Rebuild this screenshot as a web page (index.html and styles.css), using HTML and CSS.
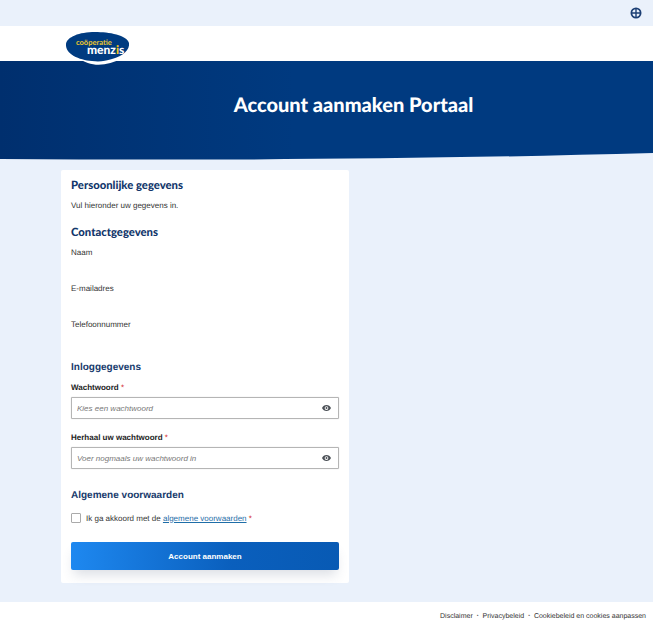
FILE: index.html
```html
<!DOCTYPE html>
<html lang="en">
<head>
  <meta charset="UTF-8">
  <meta name="viewport" content="width=device-width, initial-scale=1.0">
  <title>Account aanmaken Portaal</title>
  <link rel="stylesheet" href="styles.css">
</head>
<body>
  <div class="topbar">
    <svg class="globe" viewBox="0 0 12 12" width="12" height="12">
      <circle cx="6" cy="6" r="4.6" fill="none" stroke="#1c3f74" stroke-width="1.8"/>
      <path d="M1.5 6h9M6 1.5v9" stroke="#1c3f74" stroke-width="1.4"/>
    </svg>
  </div>

  <header class="logobar">
    <div class="logo">
      <svg viewBox="0 0 66 36" width="66" height="36">
        <path d="M14 27c10 9 28 9 43 0l-3-6z" fill="#fff"/>
        <path d="M1 13C2 6 14 1 30 1c14 0 32 3 34 11 1 7-6 13-17 16-7 2-12 3-20 2C14 29 0 23 1 13z" fill="#003b80"/>
      </svg>
      <span class="logo-small">coöperatie</span>
      <span class="logo-big">menz<i>i</i>s</span>
    </div>
  </header>

  <section class="hero">
    <h1>Account aanmaken Portaal</h1>
    <svg class="wave" viewBox="0 0 653 8" preserveAspectRatio="none">
      <path d="M0 8V7C200 8.500 420 7.500 653 1V8z" fill="#eaf1fb"/>
    </svg>
  </section>

  <main class="content">
    <form class="card">
      <h2 class="title first">Persoonlijke gegevens</h2>
      <p class="intro">Vul hieronder uw gegevens in.</p>

      <h2 class="title contact">Contactgegevens</h2>
      <div class="readonly">Naam</div>
      <div class="readonly">E-mailadres</div>
      <div class="readonly">Telefoonnummer</div>

      <h3 class="sub login">Inloggegevens</h3>
      <label class="label">Wachtwoord <span class="req">*</span></label>
      <div class="field">
        <input type="password" placeholder="Kies een wachtwoord">
        <svg class="eye" viewBox="0 0 12 8" width="9" height="6"><path d="M6 0C3.300 0 1.200 1.600 0 4c1.200 2.400 3.300 4 6 4s4.800-1.600 6-4C10.800 1.600 8.700 0 6 0zm0 6.500A2.500 2.500 0 1 1 6 1.500a2.500 2.500 0 0 1 0 5zM6 2.700a1.300 1.300 0 1 0 0 2.600 1.300 1.300 0 0 0 0-2.600z" fill="#4a4f55" fill-rule="evenodd"/></svg>
      </div>
      <label class="label second">Herhaal uw wachtwoord <span class="req">*</span></label>
      <div class="field">
        <input type="password" placeholder="Voer nogmaals uw wachtwoord in">
        <svg class="eye" viewBox="0 0 12 8" width="9" height="6"><path d="M6 0C3.300 0 1.200 1.600 0 4c1.200 2.400 3.300 4 6 4s4.800-1.600 6-4C10.800 1.600 8.700 0 6 0zm0 6.500A2.500 2.500 0 1 1 6 1.500a2.500 2.500 0 0 1 0 5zM6 2.700a1.300 1.300 0 1 0 0 2.600 1.300 1.300 0 0 0 0-2.600z" fill="#4a4f55" fill-rule="evenodd"/></svg>
      </div>

      <h3 class="sub terms">Algemene voorwaarden</h3>
      <label class="check">
        <input type="checkbox">
        <span>Ik ga akkoord met de <a href="#">algemene voorwaarden</a> <span class="req">*</span></span>
      </label>

      <button type="button" class="submit">Account aanmaken</button>
    </form>
  </main>

  <footer class="footer">
    <a href="#">Disclaimer</a>
    <span class="dot">•</span>
    <a href="#">Privacybeleid</a>
    <span class="dot">•</span>
    <a href="#">Cookiebeleid en cookies aanpassen</a>
  </footer>
</body>
</html>
```

FILE: styles.css
```css
* {
  box-sizing: border-box;
}

body {
  margin: 0;
  height: 630px;
  overflow: hidden;
  background-color: #eaf1fb;
  font-family: "Liberation Sans", Arial, sans-serif;
  font-size: 8px;
  color: #333;
  text-rendering: geometricPrecision;
  display: flex;
  flex-direction: column;
}

.topbar {
  height: 26px;
  display: flex;
  justify-content: flex-end;
  align-items: flex-start;
  padding: 7px 11px 0 0;
}

.logobar {
  height: 35px;
  background-color: #fff;
  padding-left: 65px;
  position: relative;
}

.logo {
  position: absolute;
  left: 65px;
  top: 5px;
  width: 66px;
  height: 36px;
  z-index: 2;
}

.logo svg {
  display: block;
}

.logo-small {
  position: absolute;
  left: 11px;
  top: 9px;
  font-family: "Lato", sans-serif;
  font-size: 7.500px;
  line-height: 6px;
  font-weight: 700;
  color: #e8c62e;
}

.logo-big {
  position: absolute;
  left: 22px;
  top: 14px;
  font-family: "Lato", sans-serif;
  font-size: 12px;
  line-height: 10px;
  font-weight: 900;
  color: #fff;
}

.logo-big i {
  font-style: normal;
  color: #f2c81c;
}

.hero {
  height: 99px;
  background: linear-gradient(90deg, #002f6e 0%, #003a80 45%, #003a80 100%);
  position: relative;
  display: flex;
  justify-content: center;
  padding: 32px 0 0 54px;
}

.hero h1 {
  margin: 0;
  font-family: "Lato", sans-serif;
  font-size: 20px;
  line-height: 24px;
  font-weight: 900;
  color: #fff;
}

.wave {
  position: absolute;
  left: 0;
  bottom: 0;
  width: 100%;
  height: 8px;
  display: block;
}

.content {
  flex: 1;
  padding: 10px 0 0 61px;
}

.card {
  width: 288px;
  height: 413px;
  background-color: #fff;
  border-radius: 2px;
  padding: 0 10px;
  display: flex;
  flex-direction: column;
}

.title {
  margin: 0;
  font-family: "Lato", sans-serif;
  font-size: 11.300px;
  line-height: 16px;
  font-weight: 900;
  color: #12366b;
}

.title.first {
  margin-top: 8px;
}

.title.contact {
  margin-top: 13px;
}

.intro {
  margin: 6px 0 0;
  line-height: 12px;
}

.readonly {
  height: 36px;
  padding-top: 6px;
  line-height: 12px;
}

.sub {
  margin: 0;
  font-size: 10px;
  line-height: 14px;
  font-weight: 700;
  color: #173a6c;
}

.sub.login {
  margin-top: 12px;
}

.sub.terms {
  margin-top: 20px;
}

.label {
  margin-top: 7px;
  margin-bottom: 3px;
  line-height: 12px;
  font-weight: 700;
  color: #222;
}

.label.second {
  margin-top: 13px;
}

.req {
  color: #d0111b;
  font-weight: 400;
}

.field {
  position: relative;
  height: 22px;
}

.field input {
  width: 100%;
  height: 100%;
  border: 1px solid #b5b5b5;
  border-radius: 1px;
  padding: 0 24px 0 5px;
  font-family: "Liberation Sans", Arial, sans-serif;
  font-size: 8px;
  background-color: #fff;
  box-shadow: 0 0 1px rgba(0, 0, 0, 0.25);
}

.field input::placeholder {
  font-style: italic;
  color: #777;
  opacity: 1;
}

.eye {
  position: absolute;
  right: 8px;
  top: 8px;
}

.check {
  display: flex;
  align-items: center;
  gap: 5px;
  margin-top: 9px;
  height: 12px;
}

.check input {
  appearance: none;
  width: 10px;
  height: 10px;
  margin: 0;
  border: 1px solid #aaa;
  border-radius: 1px;
  background-color: #fff;
}

.check a {
  color: #1f6ea8;
}

.submit {
  margin-top: 18px;
  height: 28px;
  border: none;
  border-radius: 2px;
  background: linear-gradient(90deg, #1e88f0 0%, #0a5fbd 60%, #085ab4 100%);
  color: #fff;
  font-family: "Liberation Sans", Arial, sans-serif;
  font-size: 8px;
  font-weight: 700;
  box-shadow: 0 8px 12px -3px rgba(60, 80, 110, 0.18);
}

.footer {
  height: 28px;
  background-color: #fff;
  display: flex;
  justify-content: flex-end;
  align-items: center;
  gap: 4px;
  padding-right: 7px;
  font-size: 7px;
}

.footer a {
  color: #333;
  text-decoration: none;
}

.dot {
  font-size: 5px;
  color: #666;
}
```
